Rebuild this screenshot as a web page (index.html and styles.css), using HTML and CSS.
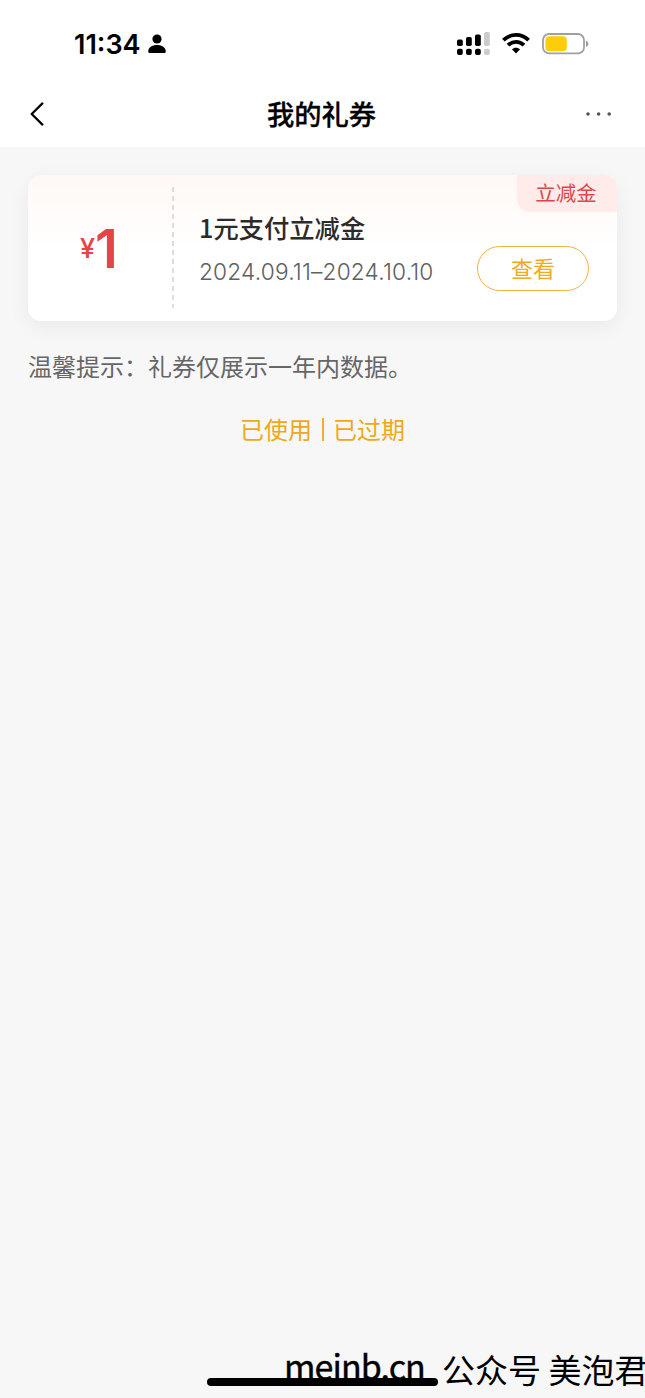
FILE: index.html
```html
<!DOCTYPE html>
<html lang="zh-CN">
    <head>
        <meta charset="UTF-8">
        <meta name="viewport" content="width=device-width, initial-scale=1.0">
        <title>我的礼券</title>
        <link rel="stylesheet" href="styles.css">
    </head>
    <body>
        <header>
            <div class="status-bar">
                <span class="time">11:34</span>
                <svg class="person" width="18" height="20" viewBox="0 0 18 20">
                    <circle cx="9" cy="5" r="4.6"/>
                    <path d="M0.2 17.2C0.2 13.6 4 11 9 11s8.8 2.6 8.8 6.2c0 1.3-.7 1.9-1.9 1.9H2.1c-1.2 0-1.9-.6-1.9-1.9z"/>
                </svg>
                <svg class="signal" width="33" height="24" viewBox="0 0 33 24">
                    <rect x="0" y="7.5" width="5.8" height="6.5" rx="1.7"/>
                    <rect x="9" y="5" width="5.8" height="9" rx="1.7"/>
                    <rect x="18" y="2.5" width="5.8" height="11.5" rx="1.7"/>
                    <rect class="off" x="27" y="0" width="5.8" height="14" rx="1.7"/>
                    <rect x="0" y="16.8" width="5.8" height="6.2" rx="2"/>
                    <rect x="9" y="16.8" width="5.8" height="6.2" rx="2"/>
                    <rect x="18" y="16.8" width="5.8" height="6.2" rx="2"/>
                    <rect class="off" x="27" y="16.8" width="5.8" height="6.2" rx="2"/>
                </svg>
                <svg class="wifi" width="28" height="21" viewBox="0 0 28 21">
                    <path class="arc" d="M1.4 7.2C8.5 .2 19.5 .2 26.6 7.2"/>
                    <path class="arc" d="M6 12.2c4.7-4.5 11.3-4.5 16 0"/>
                    <path d="M9.9 16.2c2.4-2.1 5.8-2.1 8.2 0L14 20.6z"/>
                </svg>
                <svg class="battery" width="47" height="22" viewBox="0 0 47 22">
                    <rect class="shell" x="1" y="1" width="41" height="19.4" rx="6"/>
                    <rect class="level" x="3.4" y="3.2" width="21.4" height="15" rx="3.8"/>
                    <path class="cap" d="M44 7.4c1.5.4 2.4 1.7 2.4 3.3s-.9 2.9-2.4 3.3z"/>
                </svg>
            </div>
            <div class="nav-bar">
                <svg class="back" width="14" height="24" viewBox="0 0 14 24">
                    <path d="M12.4 1.4L1.7 12l10.7 10.6"/>
                </svg>
                <h1>我的礼券</h1>
                <svg class="more" width="26" height="4" viewBox="0 0 26 4">
                    <circle cx="2" cy="2" r="1.8"/>
                    <circle cx="12.6" cy="2" r="1.8"/>
                    <circle cx="23.2" cy="2" r="1.8"/>
                </svg>
            </div>
        </header>
        <main>
            <div class="coupon">
                <div class="amount"><span class="yen">¥</span><span class="number">1</span></div>
                <div class="divider"></div>
                <div class="info">
                    <h2>1元支付立减金</h2>
                    <p class="date">2024.09.11–2024.10.10</p>
                </div>
                <div class="action">
                    <span class="tag">立减金</span>
                    <button>查看</button>
                </div>
            </div>
            <p class="hint">温馨提示：礼券仅展示一年内数据。</p>
            <div class="links">
                <a href="#">已使用</a>
                <span class="line"></span>
                <a href="#">已过期</a>
            </div>
        </main>
        <div class="home-indicator"></div>
        <div class="watermark">
            <span class="site">meinb.cn</span>
            <span class="account">公众号 美泡君</span>
        </div>
    </body>
</html>
```

FILE: styles.css
```css
* {
    box-sizing: border-box;
    margin: 0;
    padding: 0;
}

body {
    position: relative;
    height: 100vh;
    overflow: hidden;
    background-color: #f7f7f7;
    font-family: "Noto Sans CJK SC", sans-serif;
}

header {
    height: 147px;
    background-color: #fff;
}

.status-bar {
    display: flex;
    align-items: center;
    height: 87px;
    padding: 0 56px 0 74px;
}

.time {
    width: 67px;
    padding-top: 1px;
    font-family: Inter, sans-serif;
    font-size: 27px;
    font-weight: 600;
    white-space: nowrap;
}

.person {
    margin-left: 7px;
}

.signal {
    margin-left: auto;
}

.signal .off {
    fill: #cbcbcb;
}

.wifi {
    margin-left: 12px;
}

.wifi .arc {
    fill: none;
    stroke: #000;
    stroke-width: 3.8;
}

.battery {
    margin-left: 12px;
}

.battery .shell {
    fill: none;
    stroke: #a0a0a0;
    stroke-width: 1.8;
}

.battery .level {
    fill: #ffcc0a;
}

.battery .cap {
    fill: #a0a0a0;
}

.nav-bar {
    display: flex;
    justify-content: space-between;
    align-items: center;
    height: 54px;
    padding: 0 33px 0 30px;
}

.back {
    fill: none;
    stroke: #000;
    stroke-width: 2.2;
    stroke-linecap: round;
    stroke-linejoin: round;
}

.more {
    fill: #555;
}

h1 {
    margin: 0 0 3px 13px;
    font-size: 27.3px;
    line-height: 40px;
    font-weight: 500;
    -webkit-text-stroke: 0.3px #000;
}

main {
    padding: 28px;
}

.coupon {
    display: flex;
    height: 146px;
    border-radius: 13px;
    background: linear-gradient(#fff8f5, #fff 52%);
    box-shadow: 0 6px 22px rgba(0, 0, 0, 0.06);
    overflow: hidden;
}

.amount {
    display: flex;
    justify-content: center;
    align-items: center;
    width: 144px;
    padding-right: 2px;
    color: #e54545;
    font-family: Inter, sans-serif;
}

.yen {
    font-size: 27px;
    font-weight: 500;
}

.number {
    font-size: 54px;
    font-weight: 600;
}

.divider {
    width: 2px;
    height: 121px;
    margin-top: 12px;
    background: repeating-linear-gradient(#ddd 0, #ddd 5px, transparent 5px, transparent 9px);
}

.info {
    padding: 34px 0 0 25px;
    white-space: nowrap;
}

h2 {
    color: #2b2b2b;
    font-size: 25.3px;
    font-weight: 500;
    line-height: 36px;
}

.date {
    margin-top: 10px;
    color: #606060;
    font-family: Inter, sans-serif;
    font-size: 22.7px;
    font-weight: 300;
    letter-spacing: 0.18px;
    line-height: 34px;
}

.action {
    display: flex;
    flex-direction: column;
    align-items: flex-end;
    margin-left: auto;
}

.tag {
    width: 100px;
    height: 37px;
    padding-right: 2px;
    border-radius: 0 0 0 13px;
    background-color: #ffebe9;
    color: #d9474c;
    font-size: 20.5px;
    line-height: 35px;
    text-align: center;
}

button {
    width: 112px;
    height: 45px;
    margin: 34px 28px 0 0;
    padding-bottom: 4px;
    border: 1px solid #f3b33e;
    border-radius: 23px;
    background-color: #fff;
    color: #f5a91c;
    font-family: inherit;
    font-size: 22px;
    line-height: 38px;
}

.hint {
    margin-top: 27px;
    color: #666;
    font-size: 24px;
    line-height: 36px;
}

.links {
    display: flex;
    justify-content: center;
    align-items: center;
    margin-top: 27px;
    font-size: 24px;
    line-height: 36px;
}

.links a {
    color: #f0a818;
    text-decoration: none;
}

.line {
    width: 2px;
    height: 23px;
    margin: 0 9px 0 10px;
    background-color: #f0ae32;
}

.home-indicator {
    position: absolute;
    left: 207px;
    bottom: 12px;
    width: 231px;
    height: 8px;
    border-radius: 4px;
    background-color: #000;
}

.watermark {
    position: absolute;
    left: 284px;
    bottom: 5px;
    display: flex;
    align-items: baseline;
    color: #000;
    line-height: 48px;
    white-space: nowrap;
}

.site {
    position: relative;
    top: -3px;
    width: 158px;
    font-size: 34px;
    letter-spacing: -0.9px;
    -webkit-text-stroke: 0.4px #000;
}

.account {
    font-size: 33px;
}
```
